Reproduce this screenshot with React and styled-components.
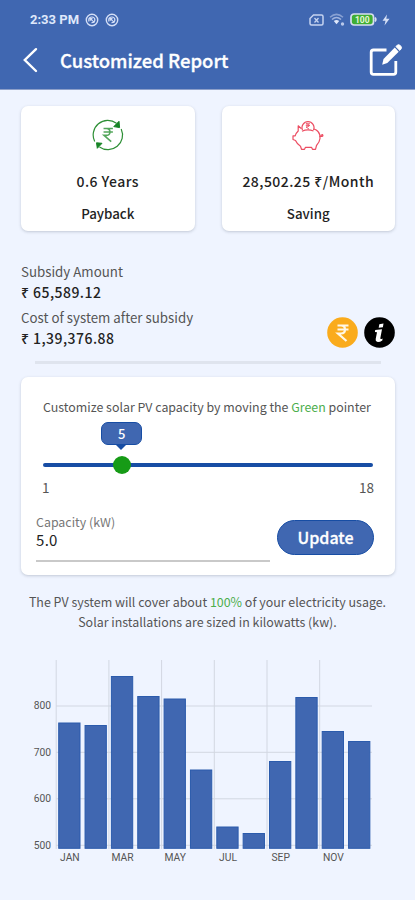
import React from "react";
import styled, { createGlobalStyle } from "styled-components";

const blue = "#4067b1";
const darkBlue = "#174da4";
const sans = `"Noto Sans CJK SC", "Noto Sans", sans-serif`;

const GlobalStyle = createGlobalStyle`
  body {
    margin: 0;
    background: #eff4ff;
  }
  * {
    box-sizing: border-box;
  }
`;

const Screen = styled.div`
  width: 415px;
  height: 900px;
  overflow: hidden;
  background: #eff4ff;
  font-family: ${sans};
  color: #222;
`;

const Header = styled.header`
  height: 90px;
  background: ${blue};
  border-bottom: 1px solid #8d9fc9;
  color: #fff;
`;

const StatusBar = styled.div`
  display: flex;
  align-items: center;
  justify-content: space-between;
  height: 39px;
  padding: 0 25px 0 30px;
`;

const StatusGroup = styled.div`
  display: flex;
  align-items: center;
  gap: ${({ $gap }) => $gap}px;
`;

const Clock = styled.span`
  font: 700 13px/18px Roboto, sans-serif;
  color: #dfe8fb;
`;

const TitleBar = styled.div`
  display: flex;
  align-items: center;
  height: 42px;
  padding: 0 12px 0 22px;
`;

const Title = styled.h1`
  flex: 1;
  margin: 0 0 0 21px;
  font-size: 18.5px;
  line-height: 28px;
  font-weight: 500;
  -webkit-text-stroke: 0.3px #fff;
`;

const Text = styled.div`
  font-size: ${({ $size }) => $size || 13.3}px;
  line-height: ${({ $line }) => $line || 20}px;
  font-weight: ${({ $weight }) => $weight || 400};
  letter-spacing: ${({ $spacing }) => $spacing || 0}px;
  color: ${({ $color }) => $color || "#222"};
  white-space: nowrap;
`;

const Green = styled.span`
  color: #4cae4c;
`;

const CardRow = styled.div`
  display: flex;
  gap: 27px;
  padding: 16px 20px 0 21px;
`;

const Card = styled.div`
  background: #fff;
  border-radius: 7px;
  box-shadow: 0 1px 3px rgba(60, 70, 90, 0.25);
`;

const StatCard = styled(Card)`
  flex: 1;
  display: flex;
  flex-direction: column;
  align-items: center;
  height: 125px;
  padding-top: 13px;

  svg {
    margin-bottom: 20px;
  }
`;

const StatLabel = styled(Text)`
  margin-top: 13px;
  font-weight: 500;
`;

const Subsidy = styled.div`
  display: flex;
  justify-content: space-between;
  align-items: flex-end;
  height: 117px;
  padding: 0 20px 0 21px;
`;

const Amount = styled.div`
  margin-top: ${({ $top }) => $top || 0}px;
`;

const AmountLabel = styled(Text)`
  color: #555;
  line-height: 19px;
  padding-bottom: 1px;
`;

const Badges = styled.div`
  display: flex;
  gap: 6px;
`;

const Divider = styled.div`
  height: 3px;
  margin: 13px 34px 13px 35px;
  background: #dfe4ee;
`;

const CapacityCard = styled(Card)`
  height: 198px;
  margin: 0 20px 0 21px;
  padding: 20px 22px 0;
`;

const Slider = styled.div`
  position: relative;
  height: 59px;
`;

const Track = styled.div`
  position: absolute;
  left: 0;
  right: 0;
  top: 46px;
  height: 4px;
  border-radius: 2px;
  background: ${darkBlue};
`;

const Thumb = styled.div`
  position: absolute;
  top: 39px;
  width: 18px;
  height: 18px;
  margin-left: -9px;
  border-radius: 50%;
  background: #169b16;
`;

const Tooltip = styled.div`
  position: absolute;
  top: 5px;
  width: 41px;
  height: 23px;
  margin-left: -20.5px;
  border: 1px solid ${darkBlue};
  border-radius: 7px;
  background: ${blue};
  color: #fff;
  font-size: 13px;
  line-height: 22px;
  font-weight: 500;
  text-align: center;

  &::after {
    content: "";
    position: absolute;
    left: 13px;
    top: 21px;
    border: 6.5px solid transparent;
    border-top-color: ${darkBlue};
    border-bottom: 0;
  }
`;

const Scale = styled.div`
  display: flex;
  justify-content: space-between;
  margin: -1px -1px 0;
`;

const Form = styled.div`
  display: flex;
  justify-content: space-between;
  margin: 13px -1px 0 -7px;
`;

const Field = styled.div`
  width: 234px;
  height: 50px;
  padding-top: 1px;
  border-bottom: 2px solid #c9c9c9;
`;

const Button = styled.button`
  width: 97px;
  height: 35px;
  margin-top: 8px;
  padding: 0 0 1px;
  border: 1px solid ${darkBlue};
  border-radius: 18px;
  background: ${blue};
  color: #fff;
  font: 500 16px/31px ${sans};
  -webkit-text-stroke: 0.3px #fff;
`;

const Summary = styled.div`
  display: flex;
  flex-direction: column;
  align-items: center;
  padding: 17px 0 28px;
`;

const Chart = styled.svg`
  display: block;
  font-family: Roboto, sans-serif;
  font-size: 10.3px;
  fill: #555;
`;

const months = [
  { name: "JAN", top: 723 },
  { name: "FEB", top: 725.5 },
  { name: "MAR", top: 676.5 },
  { name: "APR", top: 696.5 },
  { name: "MAY", top: 699 },
  { name: "JUN", top: 770 },
  { name: "JUL", top: 827 },
  { name: "AUG", top: 833.5 },
  { name: "SEP", top: 761.5 },
  { name: "OCT", top: 697.5 },
  { name: "NOV", top: 731.5 },
  { name: "DEC", top: 741.5 },
];

const ticks = [
  { value: 800, y: 706 },
  { value: 700, y: 752.3 },
  { value: 600, y: 798.8 },
  { value: 500, y: 845.3 },
];

const PITCH = 26.35;

const AppIcon = () => (
  <svg width="14" height="14" viewBox="0 0 14 14" fill="none" stroke="#d3def6">
    <circle cx="7" cy="7" r="5.700" strokeWidth="1.400" />
    <path d="M3.800 8.500V6.200Q4.200 4 6.800 4Q9.800 4 9.900 7Q9.500 9.800 6.500 9.700M5.300 5.600L9.500 9.600M5.300 7.800V5.600H7.500" strokeWidth="1.200" />
  </svg>
);

const SimIcon = () => (
  <svg width="15" height="12" viewBox="0 0 15 12" fill="none" stroke="#c5d3f0">
    <path d="M4.500 1H12.500Q14 1 14 2.500V9.500Q14 11 12.500 11H2.500Q1 11 1 9.500V4.500Z" strokeWidth="1.500" />
    <path d="M5.500 4l4 4.500M9.500 4l-4 4.500" strokeWidth="1.300" />
  </svg>
);

const WifiIcon = () => (
  <svg width="16" height="13" viewBox="0 0 16 13" fill="none" stroke="#b9c8ea">
    <path d="M1 4.200Q7.500-1.500 14 4.200" strokeWidth="1.500" opacity="0.600" />
    <path d="M3 6.500Q7.500 2.500 12 6.500" strokeWidth="1.600" opacity="0.800" />
    <path d="M4.800 8Q7.500 5.800 10.200 8L7.500 11.200Z" fill="#dfe8fb" stroke="none" />
    <circle cx="13.500" cy="11" r="1.700" fill="#b9c8ea" stroke="none" />
  </svg>
);

const BatteryIcon = () => (
  <svg width="27" height="13" viewBox="0 0 27 13">
    <rect x="1" y="1" width="22.500" height="11" rx="3" fill="#3fae35" stroke="#d6def0" strokeWidth="1.700" />
    <path d="M25 4.500q1.500 2 0 4" fill="none" stroke="#d6def0" strokeWidth="1.800" />
    <text x="12.300" y="9.600" textAnchor="middle" fontFamily="Roboto, sans-serif" fontSize="8.500" fontWeight="700" fill="#e7f8d8">100</text>
  </svg>
);

const BoltIcon = () => (
  <svg width="8" height="12" viewBox="0 0 8 12">
    <path d="M5 .5L.5 6.800H3.500L2.500 11.500L7.500 4.800H4.300Z" fill="#d6e0f6" />
  </svg>
);

const BackIcon = () => (
  <svg width="17" height="26" viewBox="0 0 17 26" fill="none">
    <path d="M14 2.200L2.800 13L14 24" stroke="#fff" strokeWidth="2.400" strokeLinecap="round" />
  </svg>
);

const EditIcon = () => (
  <svg width="34" height="34" viewBox="0 0 34 34" fill="none">
    <path d="M17.500 7H4.500Q2.200 7 2.200 9.300V29Q2.200 31.400 4.500 31.400H24.500Q26.800 31.400 26.800 29V18" stroke="#fff" strokeWidth="2.800" />
    <path d="M13.200 21.800L14.500 16L25.800 4.600L29.700 8.700L18.300 20Z" fill="#fff" />
    <path d="M26.900 3.500L28.200 2.200Q29.700 1 31.500 2.700Q33.300 4.500 32 6L30.800 7.400Z" fill="#fff" stroke="#fff" strokeLinejoin="round" />
  </svg>
);

const RupeeMark = ({ color, width }) => (
  <path
    d="M-5-7H6M-5-3H6M-5-7H-1.500Q2.500-7 2.500-3Q2.500 1-1.500 1H-4.500L4 8.500"
    fill="none"
    stroke={color}
    strokeWidth={width}
  />
);

const PaybackIcon = () => (
  <svg width="32" height="32" viewBox="0 0 32 32" fill="none">
    <g stroke="#2d8f35" strokeWidth="1.200">
      <path d="M2.700 22.500A14.600 14.600 0 0 1 24.500 4.300" />
      <path d="M29.200 10A14.600 14.600 0 0 1 7.500 28" />
    </g>
    <path d="M27 2.300L27.600 8.600L21.800 7.600ZM4.500 23.800L10 24.300L5.300 29.300Z" fill="#168425" stroke="#168425" />
    <g transform="translate(15.800 15.500) scale(.85)">
      <RupeeMark color="#53a65b" width={1.9} />
    </g>
  </svg>
);

const PiggyIcon = () => (
  <svg width="32" height="32" viewBox="0 0 32 32" fill="none" stroke="#ec4d62" strokeWidth="1.200" strokeLinejoin="round">
    <path d="M9.500 9.800L6.200 6.800V12Q4 14 3.200 16.800H1V20.500L3.500 21.500Q5 25 8.500 27.200L9.500 30.300H12.500L13.500 28.300H19.500L20.500 30.300H23.500L24.500 26.500Q27.500 23.500 28 19.500Q28.300 15 26 12.500Q24.500 10.700 22 10" />
    <path d="M10.500 11A6 6 0 1 1 21.500 11M10 12.300Q15.500 9.700 21.500 12M27.500 17.300Q32 18 30.500 15.500L28.500 16.500" />
    <path d="M13.800 4.800H18M13.800 6.600H18M14 4.800Q17.500 4.800 17 7Q16.500 8 14 8L17 10" strokeWidth=".9" />
  </svg>
);

const RupeeBadge = () => (
  <svg width="31" height="31" viewBox="0 0 31 31">
    <circle cx="15.500" cy="15.500" r="15.300" fill="#faab1c" />
    <g transform="translate(15.500 15.500)">
      <RupeeMark color="#fff8e8" width={2.2} />
    </g>
  </svg>
);

const InfoBadge = () => (
  <svg width="31" height="31" viewBox="0 0 31 31">
    <circle cx="15.500" cy="15.500" r="15.300" fill="#000" />
    <path d="M15.300 7.300L19.500 6.600L18.900 10.300L14.700 10.800Z" fill="#fff" />
    <path d="M11.200 12.900L18 12.200L16.300 21.300Q16.200 22.500 18.600 21.400L18.300 23.400Q15.500 25.300 13 24.800Q11.300 24.200 11.700 22L13 15.200L10.900 14.900Z" fill="#fff" />
  </svg>
);

const ProductionChart = () => (
  <Chart width="415" height="215" viewBox="0 660 415 215">
    <g stroke="#d2d7e2">
      {ticks.map(({ value, y }) => (
        <line key={value} x1="56" x2="372" y1={y} y2={y} />
      ))}
      {months.map(({ name }, i) =>
        i % 2 === 0 ? (
          <line key={name} x1={56.2 + i * PITCH} x2={56.2 + i * PITCH} y1="660" y2="849" />
        ) : null
      )}
    </g>
    {ticks.map(({ value, y }) => (
      <text key={value} x="51" y={y + 3.3} textAnchor="end">{value}</text>
    ))}
    {months.map(({ name, top }, i) => (
      <g key={name}>
        <rect
          x={58.7 + i * PITCH}
          y={top}
          width="21.300"
          height={848.3 - top}
          fill={blue}
          stroke="#2b5bac"
        />
        {i % 2 === 0 && (
          <text x={69.9 + i * PITCH} y="861" textAnchor="middle">{name}</text>
        )}
      </g>
    ))}
  </Chart>
);

const CapacitySlider = ({ value, min, max }) => {
  const left = `${((value - min) / (max - min)) * 100 + 0.3}%`;
  return (
    <Slider>
      <Track />
      <Tooltip style={{ left }}>{value}</Tooltip>
      <Thumb style={{ left }} />
    </Slider>
  );
};

const App = () => {
  return (
    <Screen>
      <GlobalStyle />
      <Header>
        <StatusBar>
          <StatusGroup $gap={6}>
            <Clock>2:33 PM</Clock>
            <AppIcon />
            <AppIcon />
          </StatusGroup>
          <StatusGroup $gap={5}>
            <SimIcon />
            <WifiIcon />
            <BatteryIcon />
            <BoltIcon />
          </StatusGroup>
        </StatusBar>
        <TitleBar>
          <BackIcon />
          <Title>Customized Report</Title>
          <EditIcon />
        </TitleBar>
      </Header>

      <CardRow>
        <StatCard>
          <PaybackIcon />
          <Text $size={14} $weight={500} $spacing={0.45}>0.6 Years</Text>
          <StatLabel>Payback</StatLabel>
        </StatCard>
        <StatCard>
          <PiggyIcon />
          <Text $size={14} $weight={500} $spacing={0.45}>28,502.25 ₹/Month</Text>
          <StatLabel>Saving</StatLabel>
        </StatCard>
      </CardRow>

      <Subsidy>
        <div>
          <Amount>
            <AmountLabel>Subsidy Amount</AmountLabel>
            <Text $size={14} $weight={500} $spacing={0.45}>₹ 65,589.12</Text>
          </Amount>
          <Amount $top={6}>
            <AmountLabel>Cost of system after subsidy</AmountLabel>
            <Text $size={14} $weight={500} $spacing={0.45}>₹ 1,39,376.88</Text>
          </Amount>
        </div>
        <Badges>
          <RupeeBadge />
          <InfoBadge />
        </Badges>
      </Subsidy>
      <Divider />

      <CapacityCard>
        <Text $size={12.4} $color="#555">
          Customize solar PV capacity by moving the <Green>Green</Green> pointer
        </Text>
        <CapacitySlider value={5} min={1} max={18} />
        <Scale>
          <Text $size={13.5} $line={24} $color="#555">1</Text>
          <Text $size={13.5} $line={24} $color="#555">18</Text>
        </Scale>
        <Form>
          <Field>
            <Text $size={12.4} $line={18} $color="#777">Capacity (kW)</Text>
            <Text $size={15} $line={18} $spacing={0.3}>5.0</Text>
          </Field>
          <Button>Update</Button>
        </Form>
      </CapacityCard>

      <Summary>
        <Text $size={12.45} $color="#555">
          The PV system will cover about <Green>100%</Green> of your electricity usage.
        </Text>
        <Text $size={12.45} $color="#555">Solar installations are sized in kilowatts (kw).</Text>
      </Summary>
      <ProductionChart />
    </Screen>
  );
};

export default App;
